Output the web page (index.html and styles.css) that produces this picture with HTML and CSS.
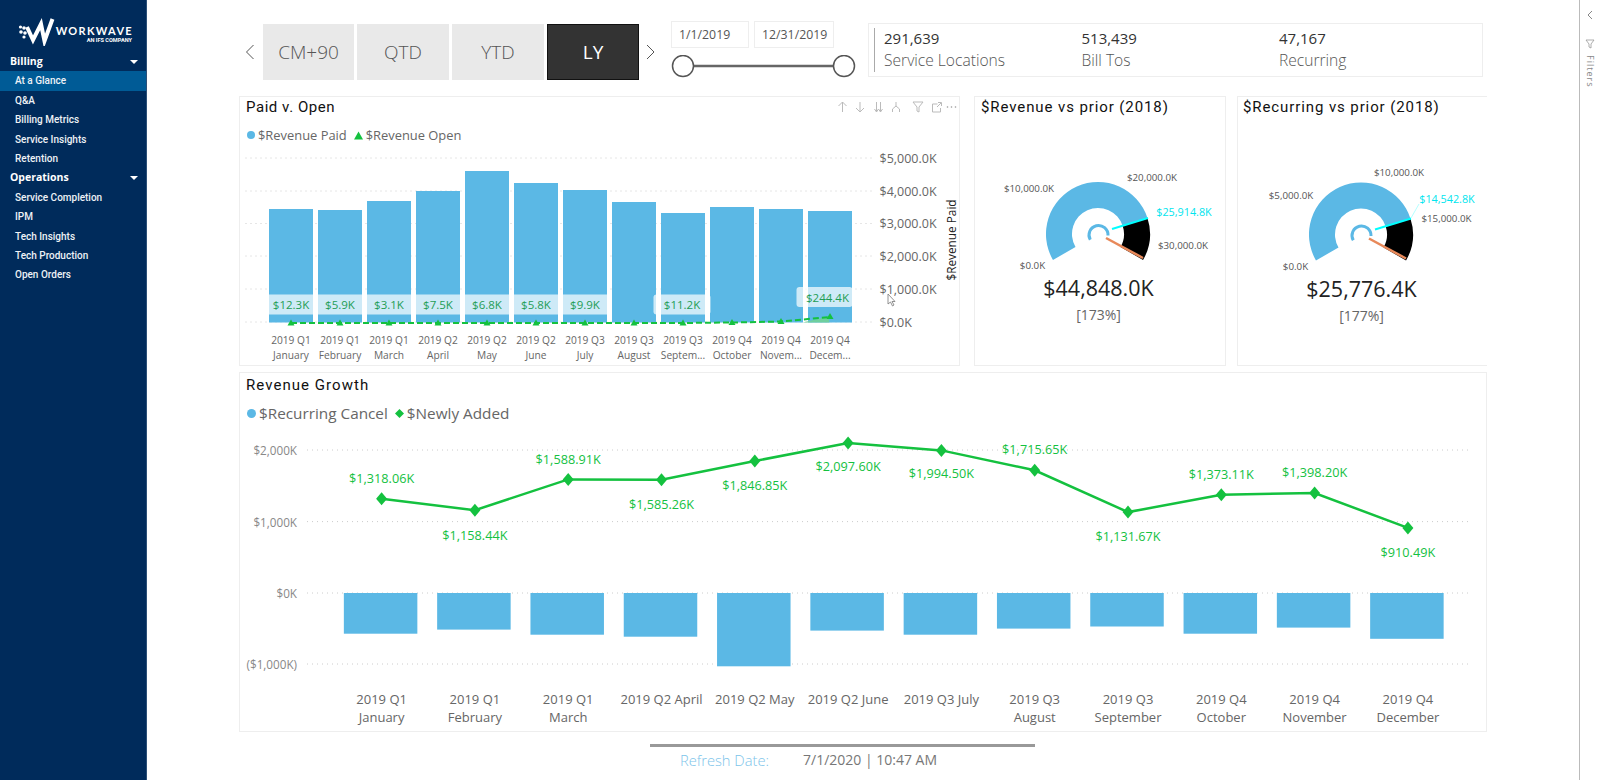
FILE: index.html
```html
<!DOCTYPE html>
<html lang="en">
<head>
<meta charset="utf-8">
<title>At a Glance</title>
<link rel="stylesheet" href="styles.css">
</head>
<body>
<aside class="sidebar">
  <div class="logo">
    <svg class="logo-mark" width="40" height="32" viewBox="18 14 40 32">
      <polyline points="27,27 33,40 41,24 44.5,41 52.5,19" fill="none" stroke="#fff" stroke-width="4"/>
      <circle cx="20.5" cy="27" r="1.6" fill="#fff"/><circle cx="24" cy="28" r="1.8" fill="#fff"/>
      <circle cx="21" cy="32" r="1.8" fill="#fff"/><circle cx="25" cy="33" r="1.8" fill="#fff"/>
      <circle cx="24" cy="37" r="1.6" fill="#fff"/>
    </svg>
    <div class="logo-text">
      <div class="logo-name">WORKWAVE</div>
      <div class="logo-sub">AN IFS COMPANY</div>
    </div>
  </div>
  <nav>
    <div class="nav-head">Billing<span class="caret"></span></div>
    <div class="nav-item active">At a Glance</div>
    <div class="nav-item">Q&amp;A</div>
    <div class="nav-item">Billing Metrics</div>
    <div class="nav-item">Service Insights</div>
    <div class="nav-item">Retention</div>
    <div class="nav-head">Operations<span class="caret"></span></div>
    <div class="nav-item">Service Completion</div>
    <div class="nav-item">IPM</div>
    <div class="nav-item">Tech Insights</div>
    <div class="nav-item">Tech Production</div>
    <div class="nav-item">Open Orders</div>
  </nav>
</aside>

<main class="main">
  <div class="topbar">
    <div class="pager">
      <svg class="chev" width="23" height="20" viewBox="0 0 23 20"><polyline points="13.500,3 6.500,10 13.500,17" fill="none" stroke="#555" stroke-width="1"/></svg>
      <div class="tab">CM+90</div>
      <div class="tab">QTD</div>
      <div class="tab">YTD</div>
      <div class="tab on">LY</div>
      <svg class="chev" width="23" height="20" viewBox="0 0 23 20"><polyline points="8,3 15,10 8,17" fill="none" stroke="#555" stroke-width="1"/></svg>
    </div>
    <div class="slicer">
      <div class="dates"><div class="date d1">1/1/2019</div><div class="date d2">12/31/2019</div></div>
      <svg class="slider" width="186" height="24" viewBox="0 0 186 24">
        <line x1="12" y1="11" x2="173" y2="11" stroke="#666" stroke-width="2.5"/>
        <circle cx="12" cy="11" r="10.5" fill="#fff" stroke="#555" stroke-width="1.5"/>
        <circle cx="173" cy="11" r="10.5" fill="#fff" stroke="#555" stroke-width="1.5"/>
      </svg>
    </div>
    <div class="card">
      <div class="kpis">
        <div class="kpi"><div class="kpi-num">291,639</div><div class="kpi-lab">Service Locations</div></div>
        <div class="kpi"><div class="kpi-num">513,439</div><div class="kpi-lab">Bill Tos</div></div>
        <div class="kpi"><div class="kpi-num">47,167</div><div class="kpi-lab">Recurring</div></div>
      </div>
    </div>
  </div>

  <div class="row">
    <section class="panel p-paid">
      <div class="head">
        <div class="title">Paid v. Open</div>
        <svg class="tools" width="122" height="14" viewBox="836 98 122 14" fill="none" stroke="#bbb" stroke-width="1">
          <path d="M842.5 110v-10M838.5 104l4-4 4 4"/>
          <path d="M860 100v10M856 106l4 4 4-4"/>
          <path d="M876.5 100v10M880.5 100v10M874.5 107l2 3 2-3M878.5 107l2 3 2-3"/>
          <path d="M896 100v4M892.5 110v-3l3.5-3 3.5 3v3"/>
          <path d="M913 100h10l-4 5v5l-2-1v-4z"/>
          <path d="M932.5 102h5M932.5 102v8h8v-4M937 105l4-4M938 100.500h3.500v3.500"/>
          <circle cx="947.500" cy="105" r="0.800" fill="#999" stroke="none"/><circle cx="951.500" cy="105" r="0.800" fill="#999" stroke="none"/><circle cx="955.500" cy="105" r="0.800" fill="#999" stroke="none"/>
        </svg>
      </div>
      <div class="legend l-small">
        <span class="dot"></span>$Revenue Paid
        <svg class="mark" width="9" height="9" viewBox="0 0 9 9"><path d="M4.500 0.500L9 8.500H0z" fill="#14c13f"/></svg>$Revenue Open
      </div>
      <svg class="chart" width="719" height="222" viewBox="240.500 143 719 222">
        <defs><path id="tri" d="M0-3.500L3.500 2.500H-3.500z" fill="#14c13f"/></defs>
        <g class="grid">
          <line x1="246" x2="872" y1="158" y2="158"/><line x1="246" x2="872" y1="191" y2="191"/>
          <line x1="246" x2="872" y1="223.500" y2="223.500"/><line x1="246" x2="872" y1="256" y2="256"/>
          <line x1="246" x2="872" y1="289" y2="289"/><line x1="246" x2="872" y1="322" y2="322"/>
        </g>
        <g class="bars">
          <rect x="269.500" y="209" width="44" height="113.500"/><rect x="318.500" y="210" width="44" height="112.500"/>
          <rect x="367.500" y="201" width="44" height="121.500"/><rect x="416.500" y="191" width="44" height="131.500"/>
          <rect x="465.500" y="171" width="44" height="151.500"/><rect x="514.500" y="183" width="44" height="139.500"/>
          <rect x="563.500" y="190" width="44" height="132.500"/><rect x="612.500" y="202" width="44" height="120.500"/>
          <rect x="661.500" y="213" width="44" height="109.500"/><rect x="710.500" y="207" width="44" height="115.500"/>
          <rect x="759.500" y="209" width="44" height="113.500"/><rect x="808.500" y="211" width="44" height="111.500"/>
        </g>
        <g class="lab-box">
          <rect x="269" y="294.500" width="45" height="20"/><rect x="318" y="294.500" width="45" height="20"/>
          <rect x="367" y="294.500" width="45" height="20"/><rect x="416" y="294.500" width="45" height="20"/>
          <rect x="465" y="294.500" width="45" height="20"/><rect x="514" y="294.500" width="45" height="20"/>
          <rect x="563" y="294.500" width="45" height="20"/>
          <rect x="654" y="294.500" width="57" height="20" rx="3"/><rect x="797" y="287" width="56" height="20" rx="3"/>
        </g>
        <path d="M803 322.500L829 316.500 830 322.500z" fill="#6fcf9e"/>
        <polyline points="291.500,323 340.500,323 389.500,323 438.500,323 487.500,323 536.500,323 585.500,323 634.500,323 683.500,323 732.500,322.500 781.500,321.500 830.500,317" fill="none" stroke="#14c13f" stroke-width="2" stroke-dasharray="6 3"/>
        <use href="#tri" x="291.500" y="323"/><use href="#tri" x="340.500" y="323"/><use href="#tri" x="389.500" y="323"/>
        <use href="#tri" x="438.500" y="323"/><use href="#tri" x="487.500" y="323"/><use href="#tri" x="536.500" y="323"/>
        <use href="#tri" x="585.500" y="323"/><use href="#tri" x="634.500" y="323"/><use href="#tri" x="683.500" y="323"/>
        <use href="#tri" x="732.500" y="322.500"/><use href="#tri" x="781.500" y="321.500"/><use href="#tri" x="830.500" y="316.500"/>
        <g class="t-green">
          <text x="291.500" y="304.500">$12.3K</text><text x="340.500" y="304.500">$5.9K</text><text x="389.500" y="304.500">$3.1K</text>
          <text x="438.500" y="304.500">$7.5K</text><text x="487.500" y="304.500">$6.8K</text><text x="536.500" y="304.500">$5.8K</text>
          <text x="585.500" y="304.500">$9.9K</text><text x="682.500" y="304.500">$11.2K</text><text x="828" y="297">$244.4K</text>
        </g>
        <g class="t-y">
          <text x="880" y="158">$5,000.0K</text><text x="880" y="191">$4,000.0K</text><text x="880" y="223.500">$3,000.0K</text>
          <text x="880" y="256">$2,000.0K</text><text x="880" y="289">$1,000.0K</text><text x="880" y="322">$0.0K</text>
        </g>
        <text class="t-axis" transform="translate(951 240) rotate(-90)">$Revenue Paid</text>
        <g class="t-x">
          <text x="291.500" y="339.500">2019 Q1</text><text x="291.500" y="354.500">January</text>
          <text x="340.500" y="339.500">2019 Q1</text><text x="340.500" y="354.500">February</text>
          <text x="389.500" y="339.500">2019 Q1</text><text x="389.500" y="354.500">March</text>
          <text x="438.500" y="339.500">2019 Q2</text><text x="438.500" y="354.500">April</text>
          <text x="487.500" y="339.500">2019 Q2</text><text x="487.500" y="354.500">May</text>
          <text x="536.500" y="339.500">2019 Q2</text><text x="536.500" y="354.500">June</text>
          <text x="585.500" y="339.500">2019 Q3</text><text x="585.500" y="354.500">July</text>
          <text x="634.500" y="339.500">2019 Q3</text><text x="634.500" y="354.500">August</text>
          <text x="683.500" y="339.500">2019 Q3</text><text x="683.500" y="354.500">Septem...</text>
          <text x="732.500" y="339.500">2019 Q4</text><text x="732.500" y="354.500">October</text>
          <text x="781.500" y="339.500">2019 Q4</text><text x="781.500" y="354.500">Novem...</text>
          <text x="830.500" y="339.500">2019 Q4</text><text x="830.500" y="354.500">Decem...</text>
        </g>
        <path d="M888.500 294v10l2.500-2 2 4 1.500-1-2-3.500h3z" fill="#fff" stroke="#777" stroke-width="0.8"/>
      </svg>
    </section>

    <section class="panel p-g1">
      <div class="head"><div class="title">$Revenue vs prior (2018)</div></div>
      <svg class="chart" width="249" height="248" viewBox="977 117 249 248">
        <path d="M1054.970 260A52 52 0 1 1 1149.450 217.930L1124.730 225.970A26 26 0 1 0 1077.500 247Z" fill="#5bb8e5"/>
        <path d="M1149.450 217.930A52 52 0 0 1 1145.030 260L1122.500 247A26 26 0 0 0 1124.730 225.970Z" fill="#000"/>
        <path d="M1092.300 239.750A9.500 9.500 0 1 1 1110 235.500" fill="none" stroke="#5bb8e5" stroke-width="3"/>
        <line x1="1114" y1="229" x2="1150" y2="218" stroke="#00ffff" stroke-width="2"/>
        <line x1="1108" y1="238" x2="1145" y2="258" stroke="#e8895a" stroke-width="2.500"/>
        <g class="t-g">
          <text x="1154" y="177">$20,000.0K</text><text x="1031" y="188">$10,000.0K</text>
          <text x="1185" y="245">$30,000.0K</text><text x="1034.500" y="265">$0.0K</text>
        </g>
        <text class="t-g t-cy" x="1186" y="211">$25,914.8K</text>
        <text class="t-val" x="1100.500" y="287">$44,848.0K</text>
        <text class="t-pct" x="1100.500" y="314">[173%]</text>
      </svg>
    </section>

    <section class="panel p-g2">
      <div class="head"><div class="title">$Recurring vs prior (2018)</div></div>
      <svg class="chart" width="249" height="248" viewBox="1239 117 249 248">
        <g transform="translate(262 0.500)">
          <path d="M1054.970 260A52 52 0 1 1 1149.450 217.930L1124.730 225.970A26 26 0 1 0 1077.500 247Z" fill="#5bb8e5"/>
          <path d="M1149.450 217.930A52 52 0 0 1 1145.030 260L1122.500 247A26 26 0 0 0 1124.730 225.970Z" fill="#000"/>
          <path d="M1092.300 239.750A9.500 9.500 0 1 1 1110 235.500" fill="none" stroke="#5bb8e5" stroke-width="3"/>
          <line x1="1114" y1="229" x2="1150" y2="218" stroke="#00ffff" stroke-width="2"/>
          <line x1="1108" y1="238" x2="1145" y2="258" stroke="#e8895a" stroke-width="2.500"/>
        </g>
        <line x1="1412" y1="218" x2="1420" y2="204" stroke="#b5ffff" stroke-width="1"/>
        <g class="t-g">
          <text x="1400" y="172">$10,000.0K</text><text x="1292" y="195">$5,000.0K</text>
          <text x="1447.500" y="218">$15,000.0K</text><text x="1296.500" y="266">$0.0K</text>
        </g>
        <text class="t-g t-cy" x="1448" y="198">$14,542.8K</text>
        <text class="t-val" x="1362.500" y="288">$25,776.4K</text>
        <text class="t-pct" x="1362.500" y="315">[177%]</text>
      </svg>
    </section>
  </div>

  <section class="panel p-growth">
    <div class="title">Revenue Growth</div>
    <div class="legend l-big">
      <span class="dot"></span>$Recurring Cancel
      <svg class="mark" width="9" height="9" viewBox="0 0 9 9"><path d="M4.500 0L9 4.500 4.500 9 0 4.500z" fill="#14c13f"/></svg>$Newly Added
    </div>
    <svg class="chart" width="1245" height="307" viewBox="240 423 1245 307">
      <defs><path id="dia" d="M0-6.500L5.500 0 0 6.500-5.500 0z" fill="#14c13f"/></defs>
      <g class="grid">
        <line x1="307" x2="1470" y1="450" y2="450"/><line x1="307" x2="1470" y1="521.600" y2="521.600"/>
        <line x1="307" x2="1470" y1="593" y2="593"/><line x1="307" x2="1470" y1="664" y2="664"/>
      </g>
      <g class="bars">
        <rect x="343.850" y="593" width="73.500" height="40.700"/><rect x="437.150" y="593" width="73.500" height="36.600"/>
        <rect x="530.450" y="593" width="73.500" height="41.700"/><rect x="623.750" y="593" width="73.500" height="43.700"/>
        <rect x="717.050" y="593" width="73.500" height="73.300"/><rect x="810.350" y="593" width="73.500" height="37.600"/>
        <rect x="903.650" y="593" width="73.500" height="41.700"/><rect x="996.950" y="593" width="73.500" height="35.600"/>
        <rect x="1090.250" y="593" width="73.500" height="33.500"/><rect x="1183.550" y="593" width="73.500" height="40.700"/>
        <rect x="1276.850" y="593" width="73.500" height="34.600"/><rect x="1370.150" y="593" width="73.500" height="45.800"/>
      </g>
      <polyline points="381.600,498.800 474.900,510.200 568.200,479.400 661.500,479.700 754.800,461 848.100,443 941.400,450.400 1034.700,470.300 1128,512.100 1221.300,494.800 1314.600,493 1407.900,527.900" fill="none" stroke="#14c13f" stroke-width="2.500"/>
      <use href="#dia" x="381.600" y="498.800"/><use href="#dia" x="474.900" y="510.200"/><use href="#dia" x="568.200" y="479.400"/>
      <use href="#dia" x="661.500" y="479.700"/><use href="#dia" x="754.800" y="461"/><use href="#dia" x="848.100" y="443"/>
      <use href="#dia" x="941.400" y="450.400"/><use href="#dia" x="1034.700" y="470.300"/><use href="#dia" x="1128" y="512.100"/>
      <use href="#dia" x="1221.300" y="494.800"/><use href="#dia" x="1314.600" y="493"/><use href="#dia" x="1407.900" y="527.900"/>
      <g class="t-dl">
        <text x="381.600" y="477.500">$1,318.06K</text><text x="474.900" y="534.700">$1,158.44K</text><text x="568.200" y="458.500">$1,588.91K</text>
        <text x="661.500" y="504">$1,585.26K</text><text x="754.800" y="485">$1,846.85K</text><text x="848.100" y="466">$2,097.60K</text>
        <text x="941.400" y="472.500">$1,994.50K</text><text x="1034.700" y="449">$1,715.65K</text><text x="1128" y="535.700">$1,131.67K</text>
        <text x="1221.300" y="473.500">$1,373.11K</text><text x="1314.600" y="471.500">$1,398.20K</text><text x="1407.900" y="552">$910.49K</text>
      </g>
      <g class="t-y2">
        <text x="297" y="450">$2,000K</text><text x="297" y="521.600">$1,000K</text><text x="297" y="593">$0K</text><text x="297" y="664">($1,000K)</text>
      </g>
      <g class="t-x2">
        <text x="381.600" y="699">2019 Q1</text><text x="381.600" y="716.500">January</text>
        <text x="474.900" y="699">2019 Q1</text><text x="474.900" y="716.500">February</text>
        <text x="568.200" y="699">2019 Q1</text><text x="568.200" y="716.500">March</text>
        <text x="661.500" y="699">2019 Q2 April</text>
        <text x="754.800" y="699">2019 Q2 May</text>
        <text x="848.100" y="699">2019 Q2 June</text>
        <text x="941.400" y="699">2019 Q3 July</text>
        <text x="1034.700" y="699">2019 Q3</text><text x="1034.700" y="716.500">August</text>
        <text x="1128" y="699">2019 Q3</text><text x="1128" y="716.500">September</text>
        <text x="1221.300" y="699">2019 Q4</text><text x="1221.300" y="716.500">October</text>
        <text x="1314.600" y="699">2019 Q4</text><text x="1314.600" y="716.500">November</text>
        <text x="1407.900" y="699">2019 Q4</text><text x="1407.900" y="716.500">December</text>
      </g>
    </svg>
  </section>

  <footer class="foot">
    <div class="foot-line"></div>
    <div class="foot-text"><span class="foot-lab">Refresh Date:</span><span class="foot-val">7/1/2020 | 10:47 AM</span></div>
  </footer>
</main>

<aside class="rail">
  <svg class="rail-chev" width="8" height="10" viewBox="0 0 8 10"><polyline points="6,1 2,5 6,9" fill="none" stroke="#888"/></svg>
  <svg class="rail-filter" width="10" height="10" viewBox="0 0 10 10"><path d="M1 1h8L6 5v4L4 8V5z" fill="none" stroke="#999" stroke-width="0.8"/></svg>
  <div class="rail-text">Filters</div>
</aside>
</body>
</html>
```
FILE: styles.css
```css
* { box-sizing: border-box; }
html, body { margin: 0; height: 780px; overflow: hidden; }
body { display: flex; background: #fff; font-family: "Open Sans", "Liberation Sans", sans-serif; color: #333; }

/* sidebar */
.sidebar { width: 147px; flex: none; background: #002b5b; border-right: 1px solid #2c5078; color: #fff; }
.logo { height: 52px; display: flex; padding: 14px 0 0 18px; }
.logo-mark { flex: none; }
.logo-text { margin: 11px 0 0 -4px; text-align: right; width: 79px; }
.logo-name { font-family: "Lato", sans-serif; font-weight: 700; font-size: 11px; letter-spacing: 1.3px; line-height: 12px; white-space: nowrap; }
.logo-sub { font-family: "Roboto", sans-serif; font-weight: 700; font-size: 5.6px; line-height: 6px; white-space: nowrap; padding-right: 1px; }
nav { display: flex; flex-direction: column; }
.nav-head { height: 19.4px; line-height: 19.4px; padding: 0 8px 0 10px; font-weight: 700; font-size: 10.5px; display: flex; justify-content: space-between; align-items: center; }
.caret { width: 0; height: 0; border: 4.5px solid transparent; border-top: 4px solid #fff; border-bottom: 0; }
.nav-item { height: 19.4px; line-height: 19.4px; padding-left: 15px; font-family: "Roboto", sans-serif; font-weight: 500; font-size: 10px; color: #eef2f6; }
.nav-item.active { background: #005b96; }

/* main */
.main { width: 1432px; flex: none; padding: 21px 0 0 93px; }
.topbar { display: flex; align-items: flex-start; height: 75px; }
.pager { display: flex; align-items: center; gap: 0; margin-top: 3px; height: 56px; }
.chev { flex: none; }
.tab { width: 92px; height: 56px; margin-right: 3px; background: #e9e9e9; color: #555; font-size: 19px; font-weight: 300; display: flex; align-items: center; justify-content: center; }
.tab:first-of-type { width: 91px; }
.tab.on { margin-right: 0; background: #333; color: #fff; border: 1px solid #111; font-weight: 400; }
.slicer { margin-left: 9px; width: 186px; flex: none; }
.dates { display: flex; gap: 5px; }
.date { height: 27px; border: 1px solid #eee; font-size: 12.300px; color: #555; display: flex; align-items: center; padding-left: 7px; white-space: nowrap; }
.d1 { width: 78px; }
.d2 { width: 80px; }
.slider { display: block; margin-top: 7px; }
.card { margin: 2px 0 0 11px; width: 615px; height: 54px; border: 1px solid #eee; padding: 4px 0 0 5px; }
.kpis { display: flex; height: 44px; border-left: 1px solid #aaa; padding-left: 9px; }
.kpi { width: 197.5px; flex: none; }
.kpi-num { font-size: 15px; line-height: 21px; color: #333; }
.kpi-lab { font-size: 15.600px; font-weight: 300; line-height: 23px; color: #555; }

.row { display: flex; height: 270px; margin-left: -1px; }
.panel { border: 1px solid #eee; flex: none; }
.p-paid { width: 721px; }
.p-g1 { width: 252px; margin-left: 14px; }
.p-g2 { width: 250px; margin-left: 11px; border-right: 0; overflow: hidden; }
.p-growth { width: 1248px; height: 360px; margin: 6px 0 0 -1px; }
.head { display: flex; justify-content: space-between; align-items: center; height: 20px; padding-right: 1px; }
.title { font-family: "Roboto", sans-serif; font-size: 15px; letter-spacing: 0.55px; color: #111; padding-left: 6px; line-height: 20px; white-space: nowrap; }
.p-g1 .title, .p-g2 .title { letter-spacing: 0.9px; }
.p-g2 .title { padding-left: 5px; }
.p-growth .title { height: 24px; line-height: 24px; letter-spacing: 1.05px; }
.legend { display: flex; align-items: center; padding-left: 6px; color: #666; white-space: nowrap; }
.l-small { height: 16px; margin-top: 10px; padding-left: 7px; font-size: 12.900px; }
.l-big { height: 20px; margin-top: 6px; font-size: 15.300px; }
.dot { width: 8px; height: 8px; border-radius: 50%; background: #5bb8e5; margin-right: 3px; }
.l-big .dot { width: 9px; height: 9px; margin: 0 3px 0 1px; }
.mark { margin: 0 3px 0 7px; flex: none; }
.chart { display: block; }

/* chart parts */
.grid line { stroke: #ccc; stroke-width: 1; stroke-dasharray: 1 4; }
.bars rect { fill: #5bb8e5; }
.lab-box rect { fill: #fff; fill-opacity: 0.7; }
svg text { dominant-baseline: central; font-family: "Open Sans", "Liberation Sans", sans-serif; }
.t-green text { font-size: 11.500px; fill: #1f9d55; text-anchor: middle; }
.t-y text { font-size: 12.500px; fill: #666; }
.t-axis { font-size: 11.800px; fill: #222; text-anchor: middle; }
.t-x text { font-size: 10.200px; fill: #666; text-anchor: middle; }
.t-g, .t-g text { font-size: 9.750px; fill: #555; text-anchor: middle; }
.t-g.t-cy { font-size: 10.800px; fill: #00e5ee; }
.t-val { font-size: 21.500px; fill: #222; text-anchor: middle; }
.t-pct { font-size: 14px; fill: #666; text-anchor: middle; }
.t-dl text { font-size: 12.700px; fill: #14c13f; text-anchor: middle; }
.t-y2 text { font-size: 11.700px; fill: #888; text-anchor: end; }
.t-x2 text { font-size: 13px; fill: #666; text-anchor: middle; }

/* footer */
.foot { padding-left: 410px; margin-top: 12px; }
.foot-line { width: 385px; height: 3px; background: #999; }
.foot-text { display: flex; margin: 3px 0 0 30px; line-height: 20px; }
.foot-lab { width: 123px; font-size: 14.700px; color: #7cc4ea; font-weight: 300; }
.foot-val { font-size: 14px; color: #777; white-space: nowrap; }

/* rail */
.rail { width: 21px; flex: none; border-left: 1px solid #bbb; display: flex; flex-direction: column; align-items: center; padding-top: 10px; }
.rail-filter { margin-top: 19px; }
.rail-text { writing-mode: vertical-rl; font-size: 9px; letter-spacing: 1px; color: #888; margin-top: 6px; }
```
